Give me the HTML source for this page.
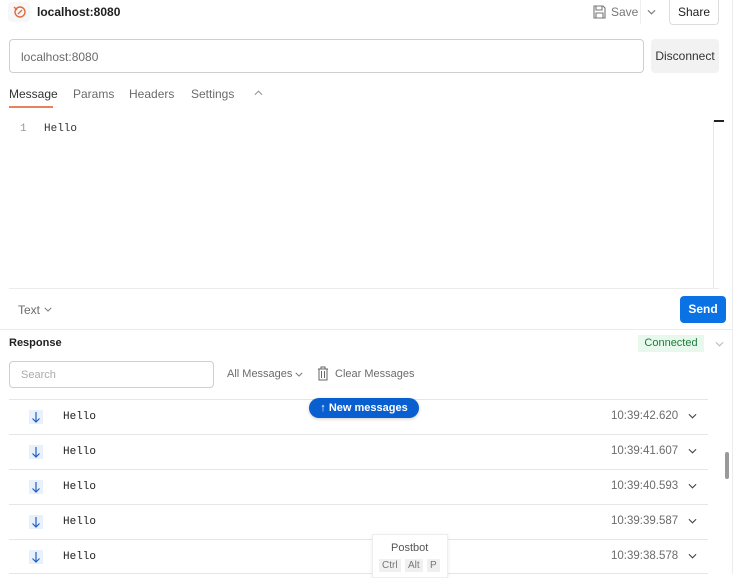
<!DOCTYPE html>
<html><head><style>
*{box-sizing:border-box;margin:0;padding:0}
body{width:740px;height:574px;overflow:hidden;background:#fff;font-family:"Liberation Sans",sans-serif;font-size:12px;color:#212121;position:relative}
.a{position:absolute}
.mono{font-family:"Liberation Mono",monospace;font-size:11px}
.row{position:absolute;left:9px;width:699px;height:35px;border-top:1px solid #e6e6e6}
.row .ic{position:absolute;left:20px;top:10px;width:14px;height:14px;background:#e8f0fb}
.row .t{position:absolute;left:54px;top:11px}
.row .ts{position:absolute;left:602px;top:10px;color:#6b6b6b;font-size:11.5px}
.row .ch{position:absolute;left:679px;top:13px}
.cv{display:inline-block}
</style></head><body>
<svg width="0" height="0" style="position:absolute"><defs>
<symbol id="chev" viewBox="0 0 10 6"><path d="M1 1l4 4 4-4" fill="none" stroke="currentColor" stroke-width="1.2"/></symbol>
<symbol id="dn" viewBox="0 0 14 14"><path d="M7 2v10M3.5 8.5L7 12l3.5-3.5" fill="none" stroke="#1d5fc4" stroke-width="1.2"/></symbol>
</defs></svg>
<div class="a" style="left:732px;top:0;width:1px;height:574px;background:#ececec"></div>
<div class="a" style="left:8px;top:2px;width:22px;height:20px;background:#f7f7f7;border-radius:4px"></div>
<svg class="a" style="left:12px;top:4px" width="15" height="15" viewBox="0 0 15 15"><circle cx="8" cy="8" r="5" fill="none" stroke="#e06a3f" stroke-width="1.4"/><path d="M2 3 L5 6 M6 10 L10 6" stroke="#e06a3f" stroke-width="1.4" fill="none"/></svg>
<div class="a" style="left:37px;top:5px;font-weight:bold;font-size:12px">localhost:8080</div>
<svg class="a" style="left:593px;top:5px" width="13" height="14" viewBox="0 0 13 14"><path d="M1 1h9l2 2v10H1z M3 1v4h6V1 M3 13V8h7v5" fill="none" stroke="#777" stroke-width="1.1"/></svg>
<div class="a" style="left:611px;top:5px;color:#777">Save</div>
<div class="a" style="left:640px;top:0;width:1px;height:24px;background:#eee"></div>
<svg class="a" style="left:647px;top:9px;color:#777" width="9" height="6"><use href="#chev"/></svg>
<div class="a" style="left:669px;top:0;width:50px;height:25px;border:1px solid #ddd;border-top:none;border-radius:0 0 4px 4px;text-align:center;line-height:24px">Share</div>
<div class="a" style="left:9px;top:39px;width:635px;height:34px;border:1px solid #cfcfcf;border-radius:4px;padding:10px 11px;color:#6b6b6b">localhost:8080</div>
<div class="a" style="left:651px;top:39px;width:68px;height:34px;background:#f2f2f2;border-radius:4px;text-align:center;line-height:34px;color:#333">Disconnect</div>
<div class="a" style="left:9px;top:87px;color:#333;font-size:12px">Message</div>
<div class="a" style="left:9px;top:106px;width:44px;height:1.5px;background:#e8825d"></div>
<div class="a" style="left:73px;top:87px;color:#6b6b6b">Params</div>
<div class="a" style="left:129px;top:87px;color:#6b6b6b">Headers</div>
<div class="a" style="left:191px;top:87px;color:#6b6b6b">Settings</div>
<svg class="a" style="left:254px;top:90px;color:#999;transform:rotate(180deg)" width="9" height="6"><use href="#chev"/></svg>
<div class="a mono" style="left:20px;top:123px;color:#999">1</div>
<div class="a mono" style="left:44px;top:123px;color:#333">Hello</div>
<div class="a" style="left:713px;top:120px;width:1px;height:168px;background:#e6e6e6"></div>
<div class="a" style="left:714px;top:120px;width:10px;height:2px;background:#222"></div>
<div class="a" style="left:9px;top:288px;width:710px;height:1px;background:#ececec"></div>
<div class="a" style="left:18px;top:303px;color:#6b6b6b">Text</div>
<svg class="a" style="left:44px;top:307px;color:#777" width="8" height="5"><use href="#chev"/></svg>
<div class="a" style="left:680px;top:296px;width:46px;height:27px;background:#0a72e4;border-radius:4px;color:#fff;font-weight:bold;text-align:center;line-height:27px">Send</div>
<div class="a" style="left:0;top:329px;width:732px;height:1px;background:#ececec"></div>
<div class="a" style="left:9px;top:337px;font-weight:bold;font-size:11px">Response</div>
<div class="a" style="left:638px;top:335px;width:66px;height:17px;background:#e8f8ec;color:#1f7a3e;text-align:center;line-height:17px;font-size:11px">Connected</div>
<svg class="a" style="left:715px;top:341px;color:#bbb" width="9" height="6"><use href="#chev"/></svg>
<div class="a" style="left:9px;top:361px;width:205px;height:27px;border:1px solid #cfcfcf;border-radius:4px;padding:7px 11px;color:#aaa;font-size:11px">Search</div>
<div class="a" style="left:227px;top:368px;color:#6b6b6b;font-size:11px">All Messages</div>
<svg class="a" style="left:295px;top:372px;color:#777" width="8" height="5"><use href="#chev"/></svg>
<svg class="a" style="left:317px;top:366px" width="12" height="15" viewBox="0 0 12 15"><path d="M1 3h10 M4 3V1h4v2 M2 3v11h8V3 M4.5 5v7 M7.5 5v7" fill="none" stroke="#666" stroke-width="1"/></svg>
<div class="a" style="left:335px;top:368px;color:#6b6b6b;font-size:11px">Clear Messages</div>
<div class="row" style="top:399px"><svg class="ic"><use href="#dn"/></svg><div class="t mono">Hello</div><div class="ts">10:39:42.620</div><svg class="ch" width="9" height="6" style="color:#444"><use href="#chev"/></svg></div>
<div class="row" style="top:434px"><svg class="ic"><use href="#dn"/></svg><div class="t mono">Hello</div><div class="ts">10:39:41.607</div><svg class="ch" width="9" height="6" style="color:#444"><use href="#chev"/></svg></div>
<div class="row" style="top:469px"><svg class="ic"><use href="#dn"/></svg><div class="t mono">Hello</div><div class="ts">10:39:40.593</div><svg class="ch" width="9" height="6" style="color:#444"><use href="#chev"/></svg></div>
<div class="row" style="top:504px"><svg class="ic"><use href="#dn"/></svg><div class="t mono">Hello</div><div class="ts">10:39:39.587</div><svg class="ch" width="9" height="6" style="color:#444"><use href="#chev"/></svg></div>
<div class="row" style="top:539px"><svg class="ic"><use href="#dn"/></svg><div class="t mono">Hello</div><div class="ts">10:39:38.578</div><svg class="ch" width="9" height="6" style="color:#444"><use href="#chev"/></svg></div>
<div class="a" style="left:9px;top:573px;width:699px;height:1px;background:#e6e6e6"></div>
<div class="a" style="left:309px;top:398px;width:110px;height:20px;background:#0a5fd0;border-radius:10px;color:#fff;font-weight:bold;font-size:11px;text-align:center;line-height:20px;box-shadow:0 1px 3px rgba(0,0,0,.2)">&#8593; New messages</div>
<div class="a" style="left:725px;top:452px;width:4px;height:27px;background:#999;border-radius:2px"></div>
<div class="a" style="left:372px;top:534px;width:76px;height:44px;background:#fff;border:1px solid #eee;box-shadow:0 1px 4px rgba(0,0,0,.08)"></div>
<div class="a" style="left:391px;top:542px;color:#555;font-size:11px">Postbot</div>
<div class="a" style="left:379px;top:559px;background:#f0f0f0;color:#777;font-size:10px;padding:1px 3px">Ctrl</div>
<div class="a" style="left:405px;top:559px;background:#f0f0f0;color:#777;font-size:10px;padding:1px 3px">Alt</div>
<div class="a" style="left:427px;top:559px;background:#f0f0f0;color:#777;font-size:10px;padding:1px 3px">P</div>
</body></html>
